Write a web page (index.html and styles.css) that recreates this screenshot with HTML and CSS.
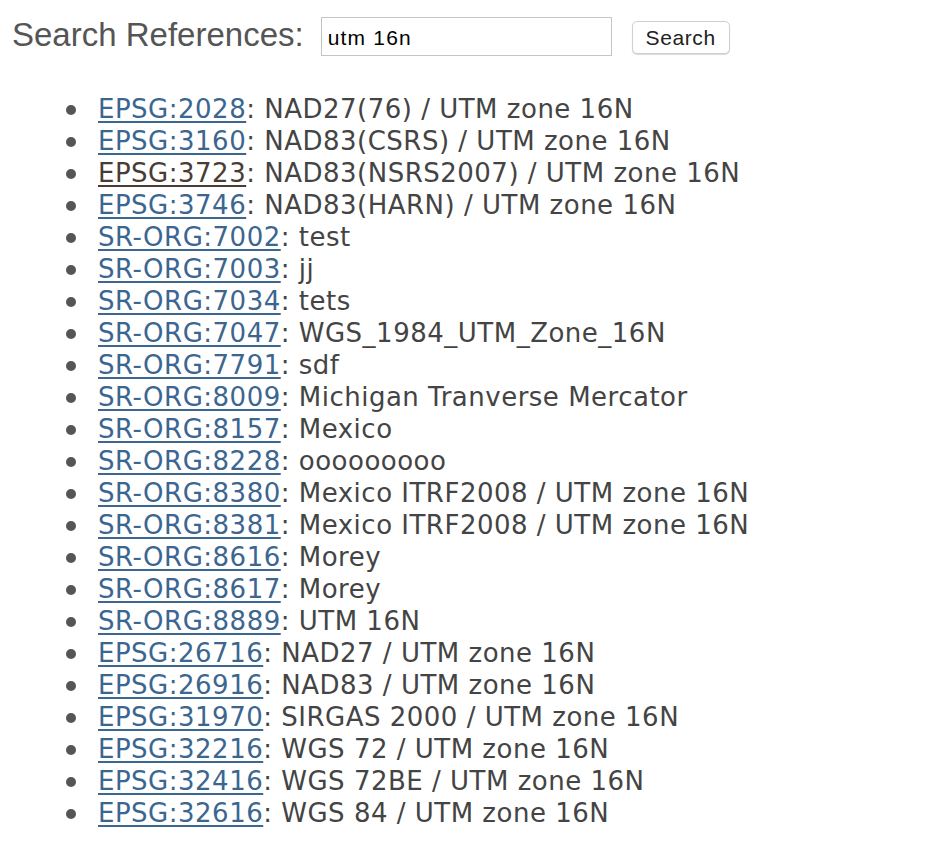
FILE: index.html
```html
<!DOCTYPE html>
<html>
<head>
<meta charset="utf-8">
<link rel="stylesheet" href="styles.css">
</head>
<body>
<form class="search">
  <label class="search-label">Search References:</label>
  <input class="search-input" type="text" value="utm 16n">
  <button class="search-btn" type="button">Search</button>
</form>
<ul class="results">
  <li><a href="#">EPSG:2028</a>: NAD27(76) / UTM zone 16N</li>
  <li><a href="#">EPSG:3160</a>: NAD83(CSRS) / UTM zone 16N</li>
  <li><a class="visited" href="#">EPSG:3723</a>: NAD83(NSRS2007) / UTM zone 16N</li>
  <li><a href="#">EPSG:3746</a>: NAD83(HARN) / UTM zone 16N</li>
  <li><a href="#">SR-ORG:7002</a>: test</li>
  <li><a href="#">SR-ORG:7003</a>: jj</li>
  <li><a href="#">SR-ORG:7034</a>: tets</li>
  <li><a href="#">SR-ORG:7047</a>: WGS_1984_UTM_Zone_16N</li>
  <li><a href="#">SR-ORG:7791</a>: sdf</li>
  <li><a href="#">SR-ORG:8009</a>: Michigan Tranverse Mercator</li>
  <li><a href="#">SR-ORG:8157</a>: Mexico</li>
  <li><a href="#">SR-ORG:8228</a>: ooooooooo</li>
  <li><a href="#">SR-ORG:8380</a>: Mexico ITRF2008 / UTM zone 16N</li>
  <li><a href="#">SR-ORG:8381</a>: Mexico ITRF2008 / UTM zone 16N</li>
  <li><a href="#">SR-ORG:8616</a>: Morey</li>
  <li><a href="#">SR-ORG:8617</a>: Morey</li>
  <li><a href="#">SR-ORG:8889</a>: UTM 16N</li>
  <li><a href="#">EPSG:26716</a>: NAD27 / UTM zone 16N</li>
  <li><a href="#">EPSG:26916</a>: NAD83 / UTM zone 16N</li>
  <li><a href="#">EPSG:31970</a>: SIRGAS 2000 / UTM zone 16N</li>
  <li><a href="#">EPSG:32216</a>: WGS 72 / UTM zone 16N</li>
  <li><a href="#">EPSG:32416</a>: WGS 72BE / UTM zone 16N</li>
  <li><a href="#">EPSG:32616</a>: WGS 84 / UTM zone 16N</li>
</ul>
</body>
</html>
```

FILE: styles.css
```css
html, body {
  background: #fff;
}
body {
  margin: 0;
  padding: 16px 0 0 12px;
  font-family: "DejaVu Sans", Verdana, sans-serif;
  color: #444;
}
.search {
  display: flex;
  align-items: center;
  margin: 0;
  height: 40px;
}
.search-label {
  font-family: "Liberation Sans", Arial, sans-serif;
  font-size: 33px;
  color: #555;
  margin-right: 17px;
  position: relative;
  top: -1px;
}
.search-input {
  box-sizing: border-box;
  width: 291px;
  height: 39px;
  border: 1px solid #c4c4c4;
  padding: 3px 6px 0;
  font-family: "Liberation Sans", Arial, sans-serif;
  font-size: 21px;
  letter-spacing: 1.2px;
  color: #000;
  margin: 0 20px 0 0;
  outline: none;
}
.search-btn {
  box-sizing: border-box;
  width: 98px;
  height: 33px;
  border: 1px solid #d0d0d0;
  border-radius: 5px;
  background: #fff;
  box-shadow: 0 1px 1px rgba(0,0,0,0.15);
  font-family: "Liberation Sans", Arial, sans-serif;
  font-size: 21px;
  letter-spacing: 0.6px;
  color: #222;
  padding: 0;
  margin-top: 3px;
}
.results {
  margin: 37px 0 0 0;
  padding: 0 0 0 86px;
  font-size: 26px;
  letter-spacing: 0.5px;
  line-height: 32px;
  list-style: none;
}
.results li::before {
  content: "";
  display: inline-block;
  width: 10px;
  height: 10px;
  border-radius: 50%;
  background: #555;
  margin-left: -32px;
  margin-right: 22px;
  vertical-align: 3px;
}
.results a {
  color: #3b6690;
  text-decoration: underline;
  text-underline-offset: 3px;
}
.results a.visited {
  color: #4a3c35;
}
```
